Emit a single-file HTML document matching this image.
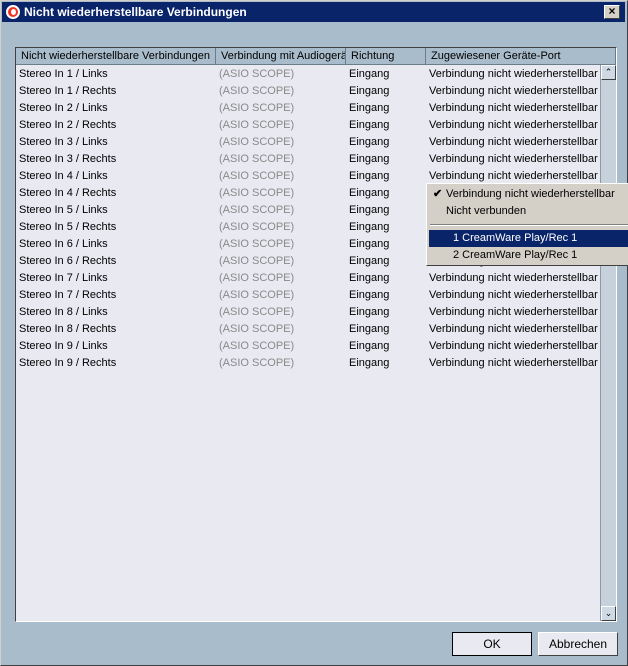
<!DOCTYPE html>
<html><head><style>
*{margin:0;padding:0;box-sizing:border-box}
body{width:628px;height:666px;background:#a9bccb;font-family:"Liberation Sans",sans-serif;font-size:11px;color:#000;position:relative;overflow:hidden}
.win{position:absolute;left:0;top:0;width:628px;height:666px;border:1px solid #d4d0c8;border-right-color:#404040;border-bottom-color:#404040}
.title{position:absolute;left:2px;top:2px;width:623px;height:20px;background:#0a246a;color:#fff;font-weight:bold;font-size:12px;line-height:20px;padding-left:22px}
.logo{position:absolute;left:4px;top:3px;width:14px;height:14px;border-radius:50%;background:#e32;border:2px solid #fff}
.logo:after{content:"";position:absolute;left:3px;top:2px;width:5px;height:6px;border-radius:50%;background:#fff}
.close{position:absolute;right:5px;top:3px;width:16px;height:14px;background:#d4d0c8;border:1px solid #fff;border-right-color:#404040;border-bottom-color:#404040;color:#000;font-size:12px;line-height:11px;text-align:center;font-weight:bold}
.list{position:absolute;left:15px;top:47px;width:602px;height:575px;background:#e8e9f1;border:1px solid #404040;border-right-color:#fff;border-bottom-color:#fff}
.hdr{position:absolute;left:0;top:0;height:17px;width:600px;background:#a9bccb}
.hdr div{position:absolute;top:0;height:17px;line-height:16px;padding-left:5px;border-right:1px solid #6b7c8a;white-space:nowrap;overflow:hidden;border-bottom:1px solid #6b7c8a}
.row{position:absolute;left:0;height:17px;line-height:19px;white-space:nowrap}
.row span{position:absolute;top:0}
.g{color:#8a8a8a}
.sb{position:absolute;left:584px;top:17px;width:16px;height:556px;background:#c7d1dc;border-left:1px solid #8a9aa8}
.sbb{position:absolute;left:0;width:15px;height:15px;background:#cfd9e3;border:1px solid #fff;border-right-color:#404040;border-bottom-color:#404040;text-align:center;font-size:9px;line-height:13px}
.btn{position:absolute;top:632px;height:24px;background:#e8e9f1;border:1px solid #fff;border-right-color:#404040;border-bottom-color:#404040;text-align:center;line-height:22px;font-size:12px}
.menu{position:absolute;left:426px;top:183px;width:204px;height:83px;background:#d4d0c8;border:1px solid #fff;border-right-color:#404040;border-bottom-color:#404040}
.mi{position:absolute;left:2px;width:200px;height:17px;line-height:17px;padding-left:17px;white-space:nowrap;font-size:11px}
</style></head><body>
<div class="win"></div>
<div class="title"><div class="logo"></div>Nicht wiederherstellbare Verbindungen<div class="close">×</div></div>
<div class="list">
<div class="hdr">
<div style="left:0;width:200px">Nicht wiederherstellbare Verbindungen</div>
<div style="left:200px;width:130px">Verbindung mit Audiogerät</div>
<div style="left:330px;width:80px">Richtung</div>
<div style="left:410px;width:190px">Zugewiesener Geräte-Port</div>
</div>
<div id="rows"></div>
<div class="sb"><div class="sbb" style="top:0">&#8963;</div><div class="sbb" style="bottom:0;top:auto">&#8964;</div></div>
</div>
<div class="btn" style="left:452px;width:80px;border:1px solid #000">OK</div>
<div class="btn" style="left:538px;width:80px">Abbrechen</div>
<div class="menu">
<div class="mi" style="top:2px"><span style="position:absolute;left:4px;font-weight:bold">✔</span>Verbindung nicht wiederherstellbar</div>
<div class="mi" style="top:19px">Nicht verbunden</div>
<div style="position:absolute;left:3px;top:40px;width:198px;border-top:1px solid #808080;border-bottom:1px solid #fff"></div>
<div class="mi" style="top:46px;background:#0a246a;color:#fff;padding-left:24px">1 CreamWare Play/Rec 1</div>
<div class="mi" style="top:63px;padding-left:24px">2 CreamWare Play/Rec 1</div>
</div>
<script>
var h='';var n=0;
for(var i=1;i<=9;i++){['Links','Rechts'].forEach(function(s){
var t=17+n*17;
h+='<div class="row" style="top:'+t+'px"><span style="left:3px">Stereo In '+i+' / '+s+'</span><span class="g" style="left:203px">(ASIO SCOPE)</span><span style="left:333px">Eingang</span><span style="left:413px;width:170px;overflow:hidden">Verbindung nicht wiederherstellbar</span></div>';n++;});}
document.getElementById('rows').innerHTML=h;
</script>
</body></html>
